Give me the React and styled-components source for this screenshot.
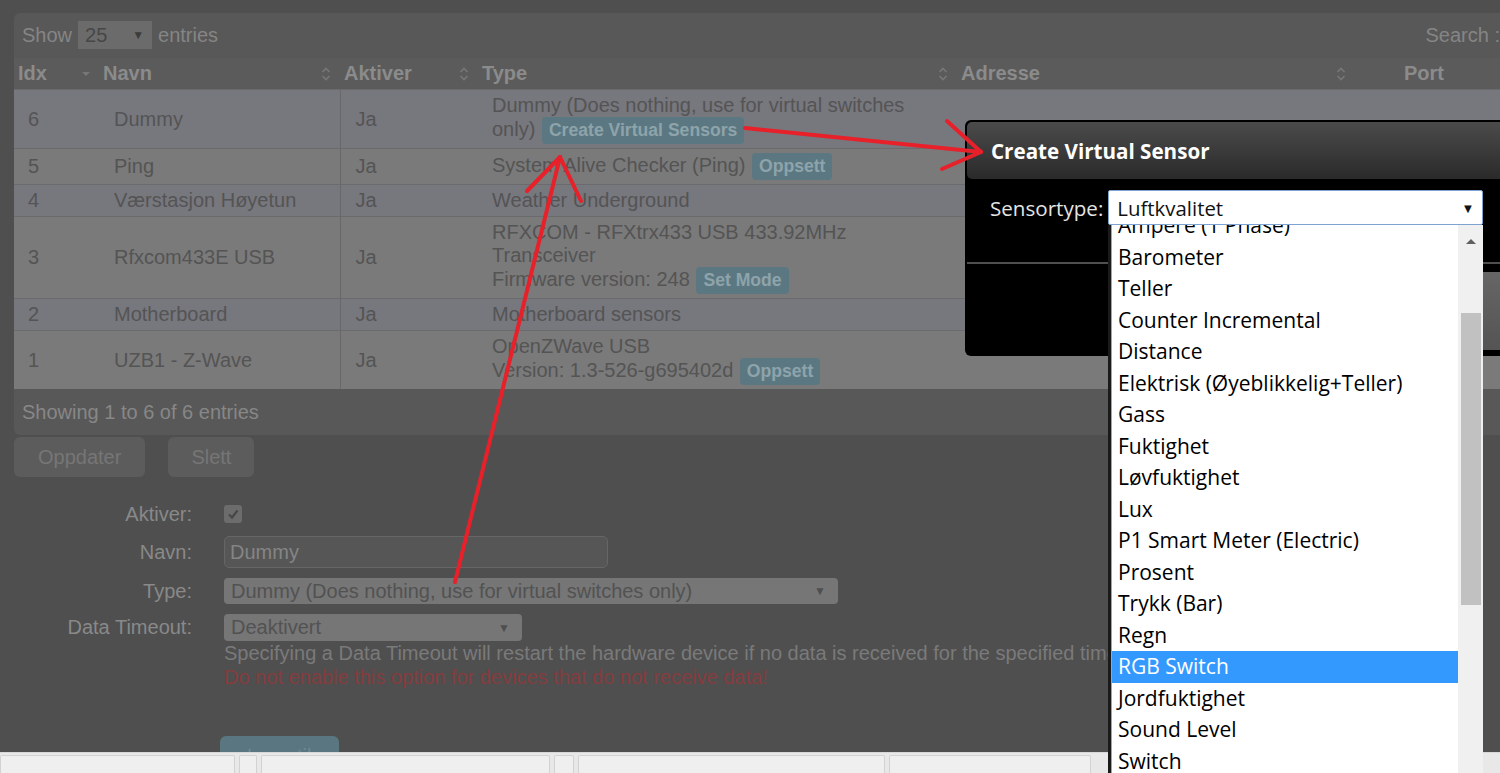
import React from 'react';
import styled, { createGlobalStyle } from 'styled-components';

const GlobalStyle = createGlobalStyle`
  html, body { margin: 0; padding: 0; }
  body {
    background: #4f4f4f;
    font-family: "Liberation Sans", Arial, sans-serif;
    overflow: hidden;
  }
`;

const Page = styled.div`
  position: relative;
  width: 1500px;
  height: 773px;
  overflow: hidden;
  box-sizing: border-box;
  padding: 13px 0 0 14px;
  background: #4f4f4f;
`;

const Panel = styled.div`
  width: 1486px;
  background: #585858;
  border-radius: 6px 0 0 6px;
  overflow: hidden;
`;

const Toolbar = styled.div`
  display: flex;
  align-items: center;
  justify-content: space-between;
  height: 45px;
  padding: 0 0 1px 8px;
  box-sizing: border-box;
  color: #858585;
  font-size: 20px;
`;

const ShowGroup = styled.div`
  display: flex;
  align-items: center;
  gap: 6px;
`;

const SmallSelect = styled.div`
  display: flex;
  align-items: center;
  justify-content: space-between;
  box-sizing: border-box;
  width: 74px;
  height: 28px;
  padding: 0 8px 0 7px;
  background: #6b6b6b;
  color: #474747;
  font-size: 20px;
`;

const Caret = styled.span`
  font-size: ${p => p.$size || 12}px;
  color: ${p => p.$color || '#3c3c3c'};
`;

const Table = styled.table`
  width: 100%;
  border-collapse: collapse;
  table-layout: fixed;
`;

const HeadCell = styled.th`
  height: 31px;
  padding: 0 ${p => p.$padRight ?? 9}px 0 ${p => p.$padLeft ?? 4}px;
  background: #5b5b5b;
  color: #8b8b8b;
  font-size: 20px;
  font-weight: bold;
  text-align: left;
`;

const HeadInner = styled.div`
  display: flex;
  align-items: center;
  justify-content: space-between;
`;

const Row = styled.tr`
  background: ${p => (p.$odd ? '#77777e' : '#7a7a7a')};
  border-top: 1px solid #6b6b6e;
`;

const Cell = styled.td`
  padding: 4px 12px 4px ${p => p.$padLeft ?? 14}px;
  color: #545454;
  font-size: 20px;
  line-height: 23px;
  vertical-align: middle;
  border-left: ${p => (p.$divider ? '1px solid #68686b' : 'none')};
`;

const Badge = styled.span`
  display: inline-block;
  height: 27px;
  line-height: 27px;
  padding: 0 7px;
  margin-left: 1px;
  border-radius: 4px;
  background: #5b7882;
  color: #8ea3aa;
  font-size: 17.6px;
  font-weight: bold;
  vertical-align: middle;
`;

const Footer = styled.div`
  display: flex;
  align-items: center;
  height: 46px;
  padding-left: 8px;
  box-sizing: border-box;
  color: #878787;
  font-size: 20px;
`;

const ButtonRow = styled.div`
  display: flex;
  gap: 23px;
  margin-top: 2px;
`;

const Button = styled.button`
  height: 40px;
  padding: 0 ${p => p.$pad || 24}px;
  border: none;
  border-radius: 6px;
  background: ${p => (p.$primary ? '#5a7680' : '#5c5c5c')};
  color: ${p => (p.$primary ? '#6f8a93' : '#767676')};
  font-family: "Liberation Sans", Arial, sans-serif;
  font-size: 20px;
`;

const Form = styled.div`
  display: grid;
  grid-template-columns: 178px auto;
  column-gap: 32px;
  row-gap: 10px;
  align-items: center;
  margin-top: 25px;
`;

const Label = styled.div`
  text-align: right;
  color: #898989;
  font-size: 20px;
  line-height: ${p => p.$lh || 24}px;
  align-self: ${p => (p.$top ? 'start' : 'center')};
`;

const Checkbox = styled.div`
  width: 18px;
  height: 18px;
  border-radius: 3px;
  background: #6c6c6c;
  display: flex;
  align-items: center;
  justify-content: center;
  margin: 3px 0;
`;

const TextInput = styled.div`
  box-sizing: border-box;
  width: 384px;
  height: 32px;
  padding: 0 5px;
  display: flex;
  align-items: center;
  border: 1px solid #666;
  border-radius: 5px;
  background: #565656;
  color: #858585;
  font-size: 20px;
`;

const Dropdown = styled.div`
  box-sizing: border-box;
  width: ${p => p.$width}px;
  height: ${p => p.$height || 26}px;
  padding: 0 12px 0 7px;
  display: flex;
  align-items: center;
  justify-content: space-between;
  border-radius: 4px;
  background: #767676;
  color: #525252;
  font-size: 20px;
`;

const Stack = styled.div`
  display: flex;
  flex-direction: column;
`;

const HelpText = styled.div`
  margin-top: 1px;
  white-space: nowrap;
  color: ${p => (p.$warn ? '#853c3e' : '#7a7a7a')};
  font-size: 20px;
  line-height: 23px;
`;

const AddRow = styled.div`
  margin: 47px 0 0 206px;
`;

const TaskBar = styled.div`
  position: absolute;
  left: 0;
  bottom: 0;
  width: 1500px;
  height: 21px;
  display: flex;
  gap: 4px;
  box-sizing: border-box;
  padding-top: 2px;
  background: #e8e8e8;
  border-top: 1px solid #d8d8d8;
`;

const TaskTab = styled.div`
  width: ${p => p.$w}px;
  flex: none;
  border: 1px solid #d2d2d2;
  border-bottom: none;
  border-radius: 2px 2px 0 0;
  background: #efefef;
`;

const Modal = styled.div`
  position: absolute;
  left: 965px;
  top: 120px;
  width: 565px;
  height: 236px;
  box-sizing: border-box;
  padding: 2px;
  border-radius: 6px;
  background: #000;
  display: flex;
  flex-direction: column;
  font-family: "Open Sans", "Noto Sans", sans-serif;
`;

const ModalHeader = styled.div`
  height: 57px;
  flex: none;
  display: flex;
  align-items: center;
  padding-left: 24px;
  border-radius: 5px;
  background: linear-gradient(#4b4b4b, #2a2a2a);
  color: #fff;
  font-size: 20.6px;
  font-weight: 700;
`;

const ModalBody = styled.div`
  height: 72px;
  flex: none;
  padding: 11px 0 0 23px;
  border-bottom: 2px solid #4f4f4f;
`;

const FieldRow = styled.div`
  display: flex;
  align-items: center;
  gap: 5px;
  color: #e4e4e4;
  font-size: 20.6px;
`;

const SensorSelect = styled.div`
  box-sizing: border-box;
  width: 375px;
  height: 35px;
  padding: 0 8px;
  display: flex;
  align-items: center;
  justify-content: space-between;
  border: 1px solid #7fa3d1;
  border-radius: 2px;
  background: #fff;
  color: #111;
  font-size: 20.4px;
`;

const ModalFooter = styled.div`
  flex: 1;
  display: flex;
  justify-content: flex-end;
  padding: 8px 8px 4px 0;
`;

const FooterButton = styled.div`
  width: 60px;
  border-radius: 4px;
  background: linear-gradient(#666, #545454);
`;

const OptionList = styled.div`
  position: absolute;
  left: 1108px;
  top: 225px;
  width: 375px;
  height: 560px;
  box-sizing: border-box;
  display: flex;
  border-left: 3px solid #1a1a1a;
  background: #fff;
  font-family: "Open Sans", "Noto Sans", sans-serif;
`;

const Options = styled.div`
  flex: 1;
  overflow: hidden;
  border-left: 1px solid #8aa9d6;
`;

const OptionScroll = styled.div`
  margin-top: -15px;
`;

const Option = styled.div`
  height: 31.5px;
  line-height: 31.5px;
  padding-left: 6px;
  font-size: 21px;
  white-space: nowrap;
  color: ${p => (p.$active ? '#fff' : '#000')};
  background: ${p => (p.$active ? '#3399ff' : 'transparent')};
`;

const ScrollTrack = styled.div`
  width: 25px;
  flex: none;
  display: flex;
  flex-direction: column;
  align-items: center;
  background: #f0f0f0;
`;

const ScrollArrow = styled.div`
  height: 32px;
  display: flex;
  align-items: center;
  justify-content: center;
  &::before {
    content: '';
    border-left: 5px solid transparent;
    border-right: 5px solid transparent;
    border-bottom: 5px solid #606060;
  }
`;

const ScrollThumb = styled.div`
  width: 20px;
  height: 292px;
  margin-top: 56px;
  background: #c1c1c1;
`;

const Annotations = styled.svg`
  position: absolute;
  left: 0;
  top: 0;
  pointer-events: none;
`;

const SortIcon = () => (
  <svg width="10" height="16" viewBox="0 0 10 16">
    <polyline points="1.5,6 5,2.5 8.5,6" fill="none" stroke="#777" strokeWidth="1.6" />
    <polyline points="1.5,10 5,13.5 8.5,10" fill="none" stroke="#777" strokeWidth="1.6" />
  </svg>
);

const SortDown = () => (
  <svg width="10" height="8" viewBox="0 0 10 8">
    <polygon points="1,2 9,2 5,6" fill="#777" />
  </svg>
);

const columns = [
  { label: 'Idx', width: 85, icon: <SortDown />, padRight: 8 },
  { label: 'Navn', width: 241, icon: <SortIcon /> },
  { label: 'Aktiver', width: 138, icon: <SortIcon /> },
  { label: 'Type', width: 479, icon: <SortIcon /> },
  { label: 'Adresse', width: 398, icon: <SortIcon /> },
  { label: 'Port', width: 145, padLeft: 49 },
];

const rows = [
  { idx: 6, name: 'Dummy', type: <>Dummy (Does nothing, use for virtual switches only) <Badge>Create Virtual Sensors</Badge></> },
  { idx: 5, name: 'Ping', type: <>System Alive Checker (Ping) <Badge>Oppsett</Badge></> },
  { idx: 4, name: 'Værstasjon Høyetun', type: 'Weather Underground' },
  { idx: 3, name: 'Rfxcom433E USB', type: <>RFXCOM - RFXtrx433 USB 433.92MHz<br />Transceiver<br />Firmware version: 248 <Badge>Set Mode</Badge></> },
  { idx: 2, name: 'Motherboard', type: 'Motherboard sensors' },
  { idx: 1, name: 'UZB1 - Z-Wave', type: <>OpenZWave USB<br />Version: 1.3-526-g695402d <Badge>Oppsett</Badge></> },
];

const sensorTypes = [
  'Ampere (1 Phase)', 'Barometer', 'Teller', 'Counter Incremental', 'Distance',
  'Elektrisk (Øyeblikkelig+Teller)', 'Gass', 'Fuktighet', 'Løvfuktighet', 'Lux',
  'P1 Smart Meter (Electric)', 'Prosent', 'Trykk (Bar)', 'Regn', 'RGB Switch',
  'Jordfuktighet', 'Sound Level', 'Switch', 'Temperatur',
];

const taskTabs = [233, 16, 287, 18, 305, 200];

function App() {
  return (
    <Page>
      <GlobalStyle />
      <Panel>
        <Toolbar>
          <ShowGroup>
            Show
            <SmallSelect>25 <Caret>▼</Caret></SmallSelect>
            entries
          </ShowGroup>
          <span>Search :</span>
        </Toolbar>

        <Table>
          <colgroup>
            {columns.map(c => <col key={c.label} style={{ width: c.width }} />)}
          </colgroup>
          <thead>
            <tr>
              {columns.map(c => (
                <HeadCell key={c.label} $padLeft={c.padLeft} $padRight={c.padRight}>
                  <HeadInner>
                    <span>{c.label}</span>
                    {c.icon}
                  </HeadInner>
                </HeadCell>
              ))}
            </tr>
          </thead>
          <tbody>
            {rows.map((r, i) => (
              <Row key={r.idx} $odd={i % 2 === 0}>
                <Cell>{r.idx}</Cell>
                <Cell $padLeft={15}>{r.name}</Cell>
                <Cell $padLeft={15} $divider>Ja</Cell>
                <Cell>{r.type}</Cell>
                <Cell />
                <Cell />
              </Row>
            ))}
          </tbody>
        </Table>

        <Footer>Showing 1 to 6 of 6 entries</Footer>
      </Panel>

      <ButtonRow>
        <Button>Oppdater</Button>
        <Button $pad={23}>Slett</Button>
      </ButtonRow>

      <Form>
        <Label>Aktiver:</Label>
        <Checkbox>
          <svg width="12" height="12" viewBox="0 0 12 12">
            <polyline points="2,6.5 5,9.5 10.5,2.5" fill="none" stroke="#474747" strokeWidth="2.2" />
          </svg>
        </Checkbox>

        <Label>Navn:</Label>
        <TextInput>Dummy</TextInput>

        <Label>Type:</Label>
        <Dropdown $width={614}>
          Dummy (Does nothing, use for virtual switches only)
          <Caret $color="#4f4f4f">▼</Caret>
        </Dropdown>

        <Label $top $lh={27}>Data Timeout:</Label>
        <Stack>
          <Dropdown $width={298} $height={27}>
            Deaktivert
            <Caret $color="#4f4f4f">▼</Caret>
          </Dropdown>
          <HelpText>
            Specifying a Data Timeout will restart the hardware device if no data is received for the specified timeout.
          </HelpText>
          <HelpText $warn>Do not enable this option for devices that do not receive data!</HelpText>
        </Stack>
      </Form>

      <AddRow>
        <Button $primary $pad={27}>Legg til</Button>
      </AddRow>

      <TaskBar>
        {taskTabs.map((w, i) => <TaskTab key={i} $w={w} />)}
      </TaskBar>

      <Modal>
        <ModalHeader>Create Virtual Sensor</ModalHeader>
        <ModalBody>
          <FieldRow>
            Sensortype:
            <SensorSelect>
              Luftkvalitet
              <Caret $color="#111" $size={13}>▼</Caret>
            </SensorSelect>
          </FieldRow>
        </ModalBody>
        <ModalFooter>
          <FooterButton />
        </ModalFooter>
      </Modal>

      <OptionList>
        <Options>
          <OptionScroll>
            {sensorTypes.map(t => (
              <Option key={t} $active={t === 'RGB Switch'}>{t}</Option>
            ))}
          </OptionScroll>
        </Options>
        <ScrollTrack>
          <ScrollArrow />
          <ScrollThumb />
        </ScrollTrack>
      </OptionList>

      <Annotations width="1500" height="773" viewBox="0 0 1500 773">
        <g stroke="#e8202a" strokeWidth="4" strokeLinecap="round" fill="none">
          <line x1="745" y1="128" x2="981" y2="152" />
          <line x1="981" y1="152" x2="947" y2="121" />
          <line x1="981" y1="152" x2="942" y2="169" />
          <line x1="455" y1="582" x2="560" y2="157" />
          <line x1="560" y1="157" x2="527" y2="191" />
          <line x1="560" y1="157" x2="581" y2="201" />
        </g>
      </Annotations>
    </Page>
  );
}

export default App;
